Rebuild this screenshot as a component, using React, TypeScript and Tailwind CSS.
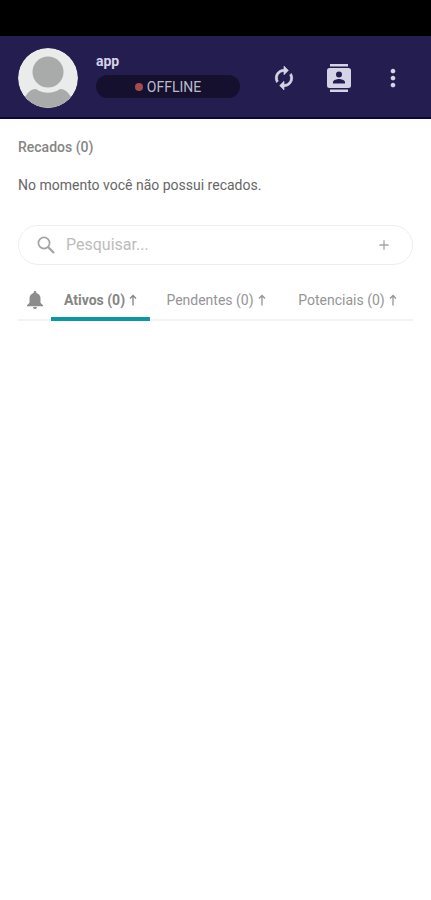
import type { ReactNode } from "react";
import { MdAdd, MdMoreVert } from "react-icons/md";

type Tab = {
  id: string;
  label: string;
  count: number;
  widthClass: string;
};

const tabs: Tab[] = [
  { id: "active", label: "Ativos", count: 0, widthClass: "w-[99px]" },
  { id: "pending", label: "Pendentes", count: 0, widthClass: "flex-[132]" },
  { id: "potential", label: "Potenciais", count: 0, widthClass: "flex-[131]" },
];

function Avatar() {
  return (
    <svg viewBox="0 0 60 60" className="size-[60px] shrink-0 rounded-full" role="img" aria-label="app">
      <circle cx="30" cy="30" r="30" fill="#e9eceb" />
      <path d="M7 49C10 44 13 41 18 41C25 46 35 46 42 41C47 41 50 44 53 49A30 30 0 0 1 7 49Z" fill="#a9abab" />
      <circle cx="30" cy="24" r="15.5" fill="#a9abab" />
    </svg>
  );
}

function RefreshIcon() {
  return (
    <svg viewBox="0 0 24 24" className="size-[26px]" fill="currentColor" aria-hidden="true">
      <g stroke="currentColor" strokeWidth="0.6">
        <path d="M12 6v3l4-4-4-4v3c-4.42 0-8 3.58-8 8 0 1.570.46 3.030 1.240 4.260L6.700 14.800c-.45-.83-.7-1.790-.7-2.800 0-3.310 2.690-6 6-6z" />
        <path d="M18.760 7.740L17.300 9.200c.44.84.7 1.790.7 2.800 0 3.310-2.690 6-6 6v-3l-4 4 4 4v-3c4.420 0 8-3.580 8-8 0-1.570-.46-3.030-1.240-4.260z" />
      </g>
    </svg>
  );
}

function ContactsIcon() {
  return (
    <svg viewBox="0 0 24 28" className="h-7 w-6" fill="currentColor" aria-hidden="true">
      <path d="M3 0h18v2.6H3zM3 25.4h18V28H3z" />
      <path
        fillRule="evenodd"
        d="M2.5 4h19A2.5 2.5 0 0 1 24 6.5v15a2.5 2.5 0 0 1-2.5 2.5h-19A2.5 2.5 0 0 1 0 21.5v-15A2.5 2.5 0 0 1 2.5 4ZM12 7.5a3 3 0 1 0 0 6 3 3 0 0 0 0-6ZM6 19.5h12V18c0-2-4-3-6-3s-6 1-6 3Z"
      />
    </svg>
  );
}

function SearchIcon() {
  return (
    <svg viewBox="0 0 18 18" className="size-[18px] shrink-0 text-[#a3a3a3]" fill="none" stroke="currentColor" aria-hidden="true">
      <circle cx="7" cy="7" r="5.6" strokeWidth="1.7" />
      <path d="M11 11L17 17" strokeWidth="2.3" />
    </svg>
  );
}

function BellIcon() {
  return (
    <svg viewBox="0 0 16 18" className="h-[18px] w-4" fill="currentColor" aria-hidden="true">
      <path d="M8 0c.8 0 1.3.5 1.3 1.3v.6c2.7.6 4.2 2.8 4.2 5.5v4.4L16 14.3v.9H0v-.9l2.500-2.500V7.400c0-2.700 1.500-4.900 4.200-5.500v-.6C6.700.5 7.200 0 8 0ZM6 16h4c0 1.200-.8 2-2 2s-2-.8-2-2Z" />
    </svg>
  );
}

function SortArrow() {
  return (
    <svg viewBox="0 0 8 12" className="h-3 w-2" fill="none" stroke="currentColor" strokeWidth="1.3" aria-hidden="true">
      <path d="M4 11.5V1.5M1 4.5L4 1.5L7 4.5" />
    </svg>
  );
}

function HeaderButton({ label, children }: { label: string; children: ReactNode }) {
  return (
    <button type="button" aria-label={label} className="flex size-8 items-center justify-center">
      {children}
    </button>
  );
}

function Header() {
  return (
    <header className="flex h-[83px] items-center border-b-2 border-[#0c0542] bg-[#231e4f] pt-0.5 pr-[22px] pl-[18px] text-[#d5d3e6]">
      <Avatar />
      <div className="ml-[18px] w-36 shrink-0 pb-1.5">
        <p className="h-5 text-sm leading-5 font-bold">app</p>
        <button
          type="button"
          className="mt-1 flex h-[23px] w-full items-center justify-center gap-1 rounded-full bg-[#14102e] text-sm text-[#bdbbcb]"
        >
          <span className="size-2 rounded-full bg-[#a44a52]" />
          OFFLINE
        </button>
      </div>
      <nav className="ml-7 flex flex-1 items-center justify-between">
        <HeaderButton label="Atualizar">
          <RefreshIcon />
        </HeaderButton>
        <HeaderButton label="Contatos">
          <ContactsIcon />
        </HeaderButton>
        <HeaderButton label="Mais opções">
          <MdMoreVert size={28} />
        </HeaderButton>
      </nav>
    </header>
  );
}

function SearchBar() {
  return (
    <div className="mt-[30px] flex h-10 items-center rounded-full border border-[#eeeeee] pr-5 pl-[18px]">
      <SearchIcon />
      <input
        type="search"
        aria-label="Pesquisar"
        placeholder="Pesquisar..."
        className="ml-[11px] min-w-0 flex-1 bg-transparent text-base text-[#666666] outline-none placeholder:text-[#bcbcbc]"
      />
      <button type="button" aria-label="Adicionar" className="text-[#a6a6a6]">
        <MdAdd size={16} />
      </button>
    </div>
  );
}

function TabBar() {
  return (
    <div className="mt-4 flex h-10 border-b-2 border-[#f3f3f3]">
      <button type="button" aria-label="Notificações" className="flex w-[33px] items-center justify-center text-[#8c8c8c]">
        <BellIcon />
      </button>
      <div role="tablist" className="flex flex-1">
        {tabs.map((tab, index) => {
          const active = index === 0;
          return (
            <button
              key={tab.id}
              type="button"
              role="tab"
              aria-selected={active}
              className={[
                "relative flex items-center justify-center gap-1 text-sm whitespace-nowrap",
                tab.widthClass,
                active ? "font-bold text-[#858585]" : "text-[#959595]",
              ].join(" ")}
            >
              {tab.label} ({tab.count})
              <SortArrow />
              {active && <span className="absolute inset-x-0 -bottom-0.5 h-1 bg-[#0d97a5]" />}
            </button>
          );
        })}
      </div>
    </div>
  );
}

export default function App() {
  return (
    <div className="min-h-screen bg-white font-[Roboto,sans-serif]">
      <div className="h-9 bg-black" />
      <Header />
      <main className="px-[18px] pt-[18px]">
        <h1 className="text-sm leading-5 font-medium text-[#858585]">Recados (0)</h1>
        <p className="mt-[18px] text-sm leading-5 text-[#666666]">No momento você não possui recados.</p>
        <SearchBar />
        <TabBar />
      </main>
    </div>
  );
}
